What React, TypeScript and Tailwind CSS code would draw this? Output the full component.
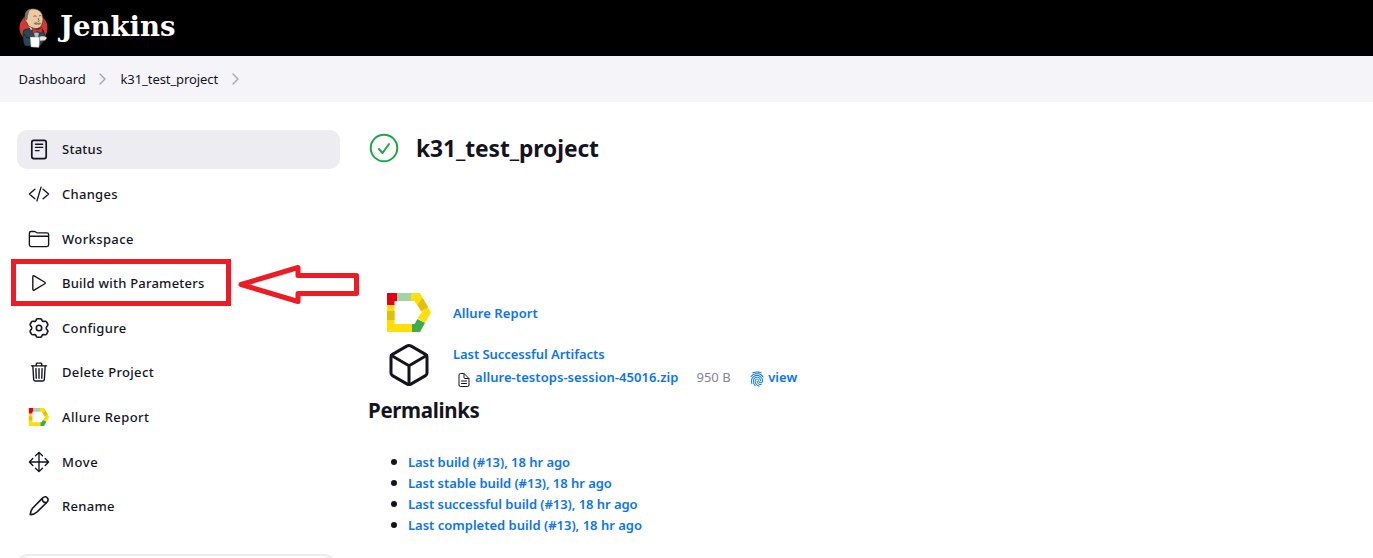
import type { ReactNode } from "react";
import {
  IoCodeSlashOutline,
  IoCubeOutline,
  IoDocumentTextOutline,
  IoFingerPrint,
  IoFolderOutline,
  IoMoveOutline,
  IoPlayOutline,
  IoTrashOutline,
} from "react-icons/io5";

const ICON = "size-[22px]";
const LINK = "font-semibold text-[#0b74ee]";

function Butler() {
  return (
    <svg className="h-[40px] w-[29px]" viewBox="0 0 29 40">
      <circle cx="14.5" cy="20" r="14" fill="#d33833" />
      <path d="M5 22 C3 27 4 34 6 38 L21 38 L27 30 L24 22 L16 19 Z" fill="#2b4655" stroke="#12202a" strokeWidth=".8" />
      <path d="M0 28 Q2 34 6 38.500 L10 40 H0Z" fill="#000" />
      <path d="M9 17 L12 22 L19 20 L20 17 Z" fill="#f0e9dc" />
      <path d="M6 10 C5.500 4 9 .8 14 .8 C20.500 .8 24 5 24 11 C24 17 21 21 16.500 20.500 C12 20 8.500 18 8 14.500 C6.500 14 5.500 12 6 10 Z" fill="#ecc9a2" stroke="#3a2c20" strokeWidth=".7" />
      <path d="M6 12 C5 5 8 1.500 11.500 1.200 C9.500 3 9.800 5 9 7.500 C8.700 9 8.900 10 8 12.500 Z" fill="#77716a" />
      <path d="M14.500 8.400 q1.500 -1.200 3 0 M20 8 q1.300 -1 2.500 0 M19 10 q2 3 0 4" fill="none" stroke="#4a3526" strokeWidth=".7" />
      <path d="M14.500 15.500 Q17 13.500 19 15 Q21 14 22.500 15.500 Q20 17.500 18.500 16.200 Q17 17.500 14.500 15.500 Z" fill="#8d7a68" />
      <path d="M13 20 L18 22 L23 19.500 L23 25 L18 23.500 L14 26 Z" fill="#d33833" stroke="#5d1512" strokeWidth=".5" />
      <path d="M15 25 L17.500 24.500 L20 25 L19 29 L16 29 Z" fill="#a9c2ce" />
      <path d="M11 29 L21 29 L20 39.500 L12 39 Z" fill="#fff" stroke="#777" strokeWidth=".4" />
      <path d="M20 29 C23 27 27 28 28 30 L26 32.500 L21 33 Z" fill="#e9e3d8" stroke="#555" strokeWidth=".5" />
      <path d="M5 26 Q7 31 11 30" fill="none" stroke="#12202a" strokeWidth="1" />
    </svg>
  );
}

function StatusIcon() {
  return (
    <svg className={ICON} viewBox="0 0 22 22" fill="none" stroke="currentColor" strokeLinecap="round">
      <rect x="3.800" y="1.400" width="14.400" height="18.200" rx="2" strokeWidth="1.700" />
      <path d="M7.500 5.200h7.200M7.500 8.400h7.200M7.500 11.600h3.600" strokeWidth="1.400" />
    </svg>
  );
}

function GearIcon() {
  return (
    <svg className={ICON} viewBox="0 0 22 22" fill="none" stroke="currentColor" strokeWidth="1.600" strokeLinejoin="round">
      <circle cx="11" cy="11" r="2.700" />
      <path d="M8.300 2.600 Q8.700 1.700 9.700 1.700 H12.300 Q13.300 1.700 13.700 2.600 L14.100 3.600 Q14.500 4.500 15.500 4.400 L17 4.200 Q18 4.100 18.500 4.900 L19.700 7 Q20.200 7.900 19.500 8.700 L18.600 9.800 Q17.800 11 18.600 12.200 L19.500 13.300 Q20.200 14.100 19.700 15 L18.500 17.100 Q18 17.900 17 17.800 L15.500 17.600 Q14.500 17.500 14.100 18.400 L13.700 19.400 Q13.300 20.300 12.300 20.300 H9.700 Q8.700 20.300 8.300 19.400 L7.900 18.400 Q7.500 17.500 6.500 17.600 L5 17.800 Q4 17.900 3.500 17.100 L2.300 15 Q1.800 14.100 2.500 13.300 L3.400 12.200 Q4.200 11 3.400 9.800 L2.500 8.700 Q1.800 7.900 2.300 7 L3.500 4.900 Q4 4.100 5 4.200 L6.500 4.400 Q7.500 4.500 7.900 3.600 Z" />
    </svg>
  );
}

function PencilIcon() {
  return (
    <svg className={ICON} viewBox="0 0 22 22" fill="none" stroke="currentColor" strokeWidth="1.600" strokeLinejoin="round">
      <path d="M2.200 19.800 C2.300 17.200 3.200 14.800 5 12.800 L14.200 3.400 C16 1.600 17.800 1.300 19.200 2.700 C20.600 4.100 20.300 5.900 18.500 7.700 L9 17 C7.200 18.800 4.800 19.700 2.200 19.800 Z" />
      <path d="M14.300 3.700 C14 6 15.800 8 18.400 7.600" />
    </svg>
  );
}

function AllureIcon({ className }: { className: string }) {
  return (
    <svg className={className} viewBox="0 0 44 39">
      <path d="M0 12H7.500V31H25V39H0Z" fill="#ffde0a" />
      <path d="M0 18H7.500V27H0Z" fill="#dfc00f" />
      <path d="M0 0H10V8H7.500V12H0Z" fill="#e60014" />
      <path d="M10 0H24V8H10Z" fill="#a5d3a5" />
      <path d="M24 0H33L44 19.500L38 30L30.500 25L35 19.500L27.500 8H24Z" fill="#ffde0a" />
      <path d="M35.500 5L41 14L34 18L30.500 11.500Z" fill="#dfc00f" />
      <path d="M30.500 26L38 30L33 39H25V31H27.500Z" fill="#3dab49" />
    </svg>
  );
}

function Chevron() {
  return (
    <svg className="h-[12px] w-[7px]" viewBox="0 0 7 12" fill="none" stroke="#a5a3b8" strokeWidth="1.400" strokeLinecap="round" strokeLinejoin="round">
      <path d="M1 1l5 5-5 5" />
    </svg>
  );
}

const tasks: { label: string; icon: ReactNode; tracking: string; active?: boolean; marked?: boolean }[] = [
  { label: "Status", tracking: "tracking-[0.250px]", icon: <StatusIcon />, active: true },
  { label: "Changes", tracking: "tracking-[0.280px]", icon: <IoCodeSlashOutline className={ICON} /> },
  { label: "Workspace", tracking: "tracking-[0.380px]", icon: <IoFolderOutline className={ICON} /> },
  { label: "Build with Parameters", tracking: "tracking-[0.230px]", icon: <IoPlayOutline className={ICON} />, marked: true },
  { label: "Configure", tracking: "tracking-[0.360px]", icon: <GearIcon /> },
  { label: "Delete Project", tracking: "tracking-[0.340px]", icon: <IoTrashOutline className={ICON} /> },
  { label: "Allure Report", tracking: "tracking-[0.420px]", icon: <AllureIcon className="h-[18px] w-[22px]" /> },
  { label: "Move", tracking: "tracking-[0.600px]", icon: <IoMoveOutline className={ICON} /> },
  { label: "Rename", tracking: "tracking-[0.280px]", icon: <PencilIcon /> },
];

const permalinks = [
  { label: "Last build (#13), 18 hr ago", tracking: "tracking-[-0.040px]" },
  { label: "Last stable build (#13), 18 hr ago", tracking: "tracking-[-0.040px]" },
  { label: "Last successful build (#13), 18 hr ago", tracking: "tracking-[-0.050px]" },
  { label: "Last completed build (#13), 18 hr ago", tracking: "tracking-normal" },
];

function Marker() {
  return (
    <>
      <div className="absolute -left-[6px] -top-[5px] h-[47px] w-[220px] border-[5px] border-[#ed1c24]" />
      <svg className="absolute left-[220px] top-0 h-[40px] w-[124px]" viewBox="0 0 124 40" fill="none" stroke="#ed1c24" strokeWidth="5" strokeLinejoin="round">
        <path d="M4 20.500L61 3.500V11.500H119.500V29.500H61V37.500Z" />
      </svg>
    </>
  );
}

export default function App() {
  return (
    <div className="flex h-[558px] w-full flex-col overflow-hidden bg-white font-['Noto_Sans',sans-serif] text-[13px] text-[#14141f]">
      <header className="flex h-14 shrink-0 items-center gap-3 bg-black pl-[19px]">
        <Butler />
        <span className="pb-[2px] font-['DejaVu_Serif',serif] text-[27.500px] leading-none font-bold text-white">Jenkins</span>
      </header>
      <nav className="flex h-[46px] shrink-0 items-center bg-[#f5f5f9] pl-[18.500px]">
        <span className="w-[80.500px] pt-[2px]">Dashboard</span>
        <Chevron />
        <span className="ml-[14.500px] w-[111.500px] pt-[2px] tracking-[-0.080px]">k31_test_project</span>
        <Chevron />
      </nav>
      <div className="flex flex-1">
        <aside className="flex w-[368px] shrink-0 flex-col pl-[17px] pt-7">
          <ul className="flex w-[323px] flex-col gap-[5.600px]">
            {tasks.map((t) => (
              <li key={t.label} className={`relative flex h-[39px] shrink-0 items-center gap-3 rounded-[10px] pl-[11px] ${t.active ? "bg-[#ececf2]" : ""}`}>
                <span className="flex size-[22px] items-center justify-center">{t.icon}</span>
                <span className={`pt-[1.400px] font-medium ${t.tracking}`}>{t.label}</span>
                {t.marked && <Marker />}
              </li>
            ))}
          </ul>
          <div className="-ml-1 mt-[28px] h-[60px] w-[326px] shrink-0 rounded-[16px] border-2 border-[#ebebf3]" />
        </aside>
        <main className="flex flex-col">
          <div className="mt-[26px] flex h-10 items-center gap-4">
            <svg className="size-8" viewBox="0 0 32 32" fill="none" stroke="#1ea64b" strokeWidth="2" strokeLinecap="round" strokeLinejoin="round">
              <circle cx="16" cy="16" r="13.300" />
              <path d="M11 17l3.500 4L21 12" />
            </svg>
            <h1 className="pt-[2px] text-[22.750px] font-bold tracking-[-0.060px]">k31_test_project</h1>
          </div>
          <div className="mt-[125px] flex h-[39px] items-center gap-[22px] pl-[19px]">
            <AllureIcon className="h-[39px] w-[44px]" />
            <a className={`pt-[2px] tracking-[0.080px] ${LINK}`}>Allure Report</a>
          </div>
          <div className="mt-2 flex h-[52px] gap-[20px] pl-[17px]">
            <IoCubeOutline className="mt-px size-[48px]" />
            <div className="flex flex-col pt-[2px]">
              <a className={`leading-6 tracking-[-0.050px] ${LINK}`}>Last Successful Artifacts</a>
              <div className="flex h-[22px] items-center pl-[3px]">
                <IoDocumentTextOutline className="mt-[5px] size-[16px]" />
                <a className={`ml-[3px] pt-[2px] tracking-[0.060px] ${LINK}`}>allure-testops-session-45016.zip</a>
                <span className="ml-[18px] pt-[2px] text-[#8583a0]">950 B</span>
                <IoFingerPrint className="ml-[18px] mt-[3px] size-[16px] text-[#0b74ee]" />
                <a className={`ml-[3.500px] pt-[2px] tracking-[0.080px] ${LINK}`}>view</a>
              </div>
            </div>
          </div>
          <h2 className="mt-[4px] text-[20.500px] leading-7 font-bold tracking-[-0.350px]">Permalinks</h2>
          <ul className="mt-[27px] flex flex-col">
            {permalinks.map((p) => (
              <li key={p.label} className="flex h-[21px] items-center gap-[11px] pl-[23px]">
                <span className="size-[6px] rounded-full bg-[#14141f]" />
                <a className={`pt-[2px] ${p.tracking} ${LINK}`}>{p.label}</a>
              </li>
            ))}
          </ul>
        </main>
      </div>
    </div>
  );
}
